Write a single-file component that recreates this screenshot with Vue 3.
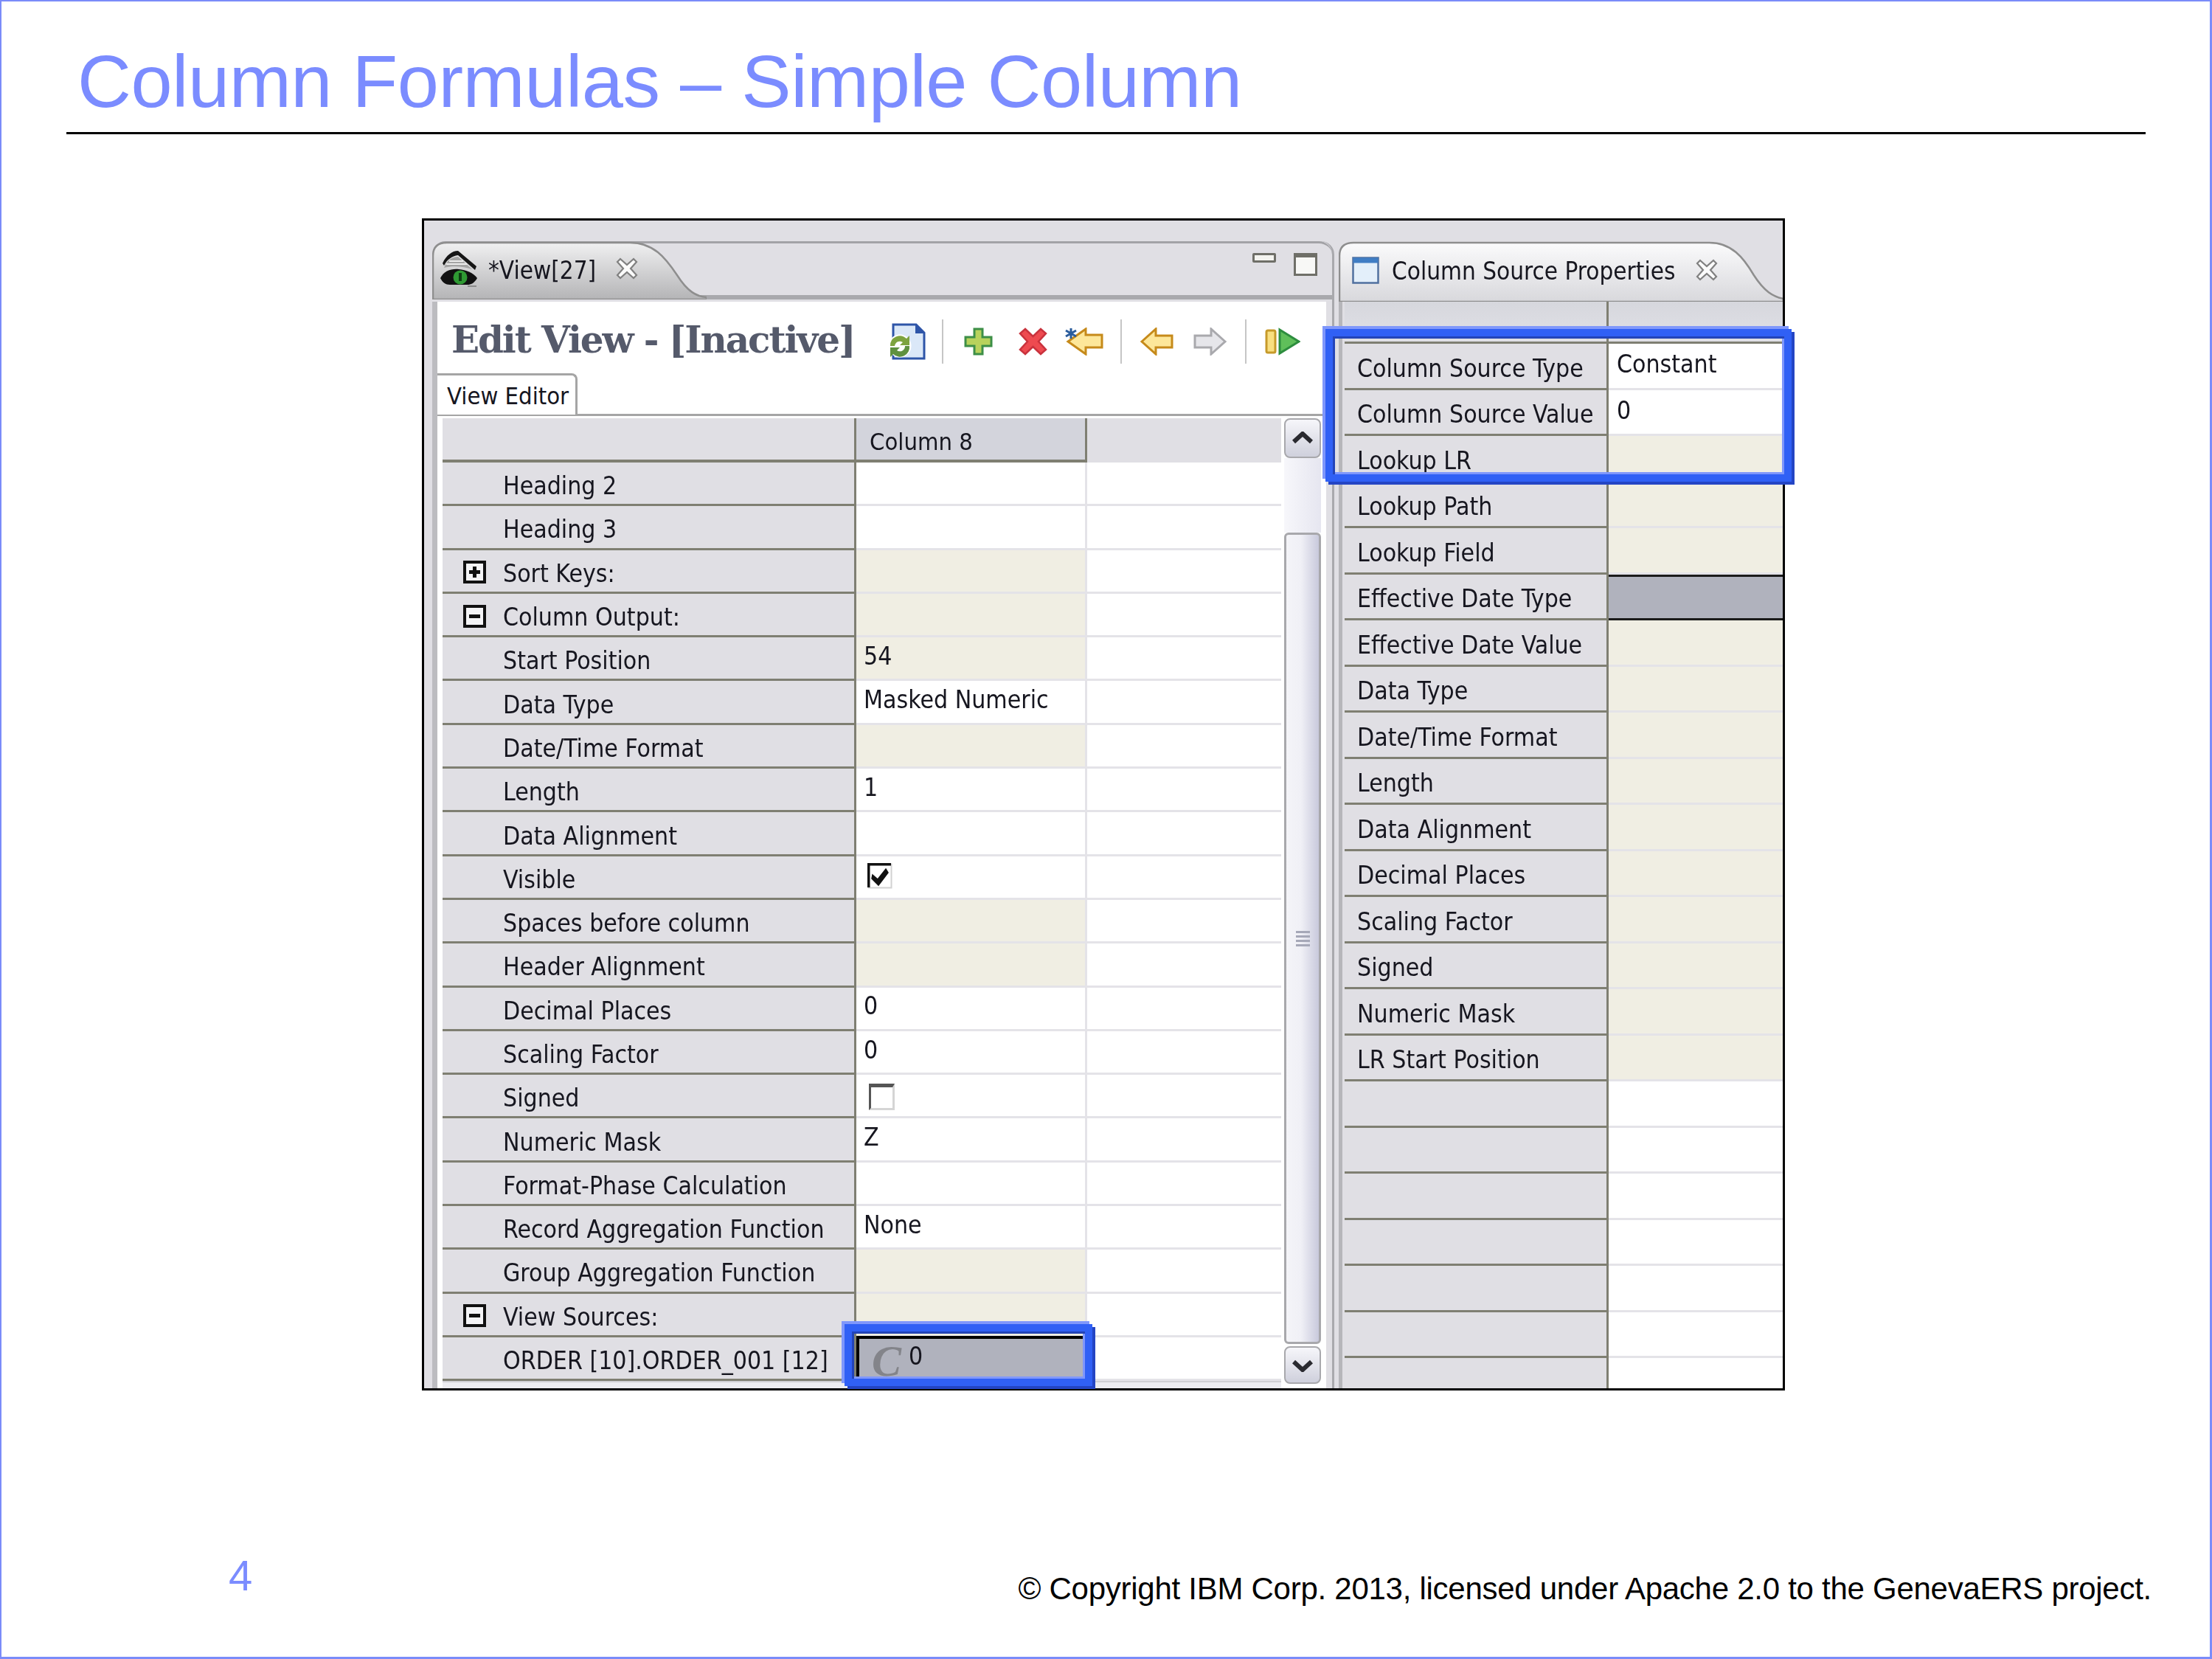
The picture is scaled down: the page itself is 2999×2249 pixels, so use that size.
<script setup>
const viewRows = [
  { label: 'Heading 2' },
  { label: 'Heading 3' },
  { label: 'Sort Keys:', tree: 'plus', kind: 'ro' },
  { label: 'Column Output:', tree: 'minus', kind: 'ro' },
  { label: 'Start Position', value: '54', kind: 'ro' },
  { label: 'Data Type', value: 'Masked Numeric' },
  { label: 'Date/Time Format', kind: 'ro' },
  { label: 'Length', value: '1' },
  { label: 'Data Alignment' },
  { label: 'Visible', check: 'on' },
  { label: 'Spaces before column', kind: 'ro' },
  { label: 'Header Alignment', kind: 'ro' },
  { label: 'Decimal Places', value: '0' },
  { label: 'Scaling Factor', value: '0' },
  { label: 'Signed', check: 'off' },
  { label: 'Numeric Mask', value: 'Z' },
  { label: 'Format-Phase Calculation' },
  { label: 'Record Aggregation Function', value: 'None' },
  { label: 'Group Aggregation Function', kind: 'ro' },
  { label: 'View Sources:', tree: 'minus', kind: 'ro' },
  { label: 'ORDER [10].ORDER_001 [12]', kind: 'sel' }
]

const sourceRows = [
  { label: 'Column Source Type', value: 'Constant' },
  { label: 'Column Source Value', value: '0' },
  { label: 'Lookup LR', kind: 'ro' },
  { label: 'Lookup Path', kind: 'ro' },
  { label: 'Lookup Field', kind: 'ro' },
  { label: 'Effective Date Type', kind: 'sel' },
  { label: 'Effective Date Value', kind: 'ro' },
  { label: 'Data Type', kind: 'ro' },
  { label: 'Date/Time Format', kind: 'ro' },
  { label: 'Length', kind: 'ro' },
  { label: 'Data Alignment', kind: 'ro' },
  { label: 'Decimal Places', kind: 'ro' },
  { label: 'Scaling Factor', kind: 'ro' },
  { label: 'Signed', kind: 'ro' },
  { label: 'Numeric Mask', kind: 'ro' },
  { label: 'LR Start Position', kind: 'ro' },
  { label: '' }, { label: '' }, { label: '' }, { label: '' }, { label: '' }, { label: '' }, { label: '' }
]
</script>

<template>
  <div class="slide">
    <h1 class="title">Column Formulas – Simple Column</h1>
    <div class="rule"></div>

    <div class="shot">
      <section class="pane pane-left">
        <div class="tabbar">
          <div class="tab tab-view">
            <svg class="tab-bg" viewBox="0 0 372 79" preserveAspectRatio="none">
              <defs>
                <linearGradient id="tabfill" x1="0" y1="0" x2="0" y2="1">
                  <stop offset="0" stop-color="#f0f0f1" />
                  <stop offset="1" stop-color="#b4b4b6" />
                </linearGradient>
              </defs>
              <path d="M1 79V20Q1 2 20 2H268C300 2 316 22 332 46 346 68 358 75 372 76V79Z" fill="url(#tabfill)" stroke="#8e8e8e" stroke-width="2.5" />
            </svg>
            <svg class="eye" viewBox="0 0 50 50">
              <path d="M3 18C8 7 16 1 24 1L49 22 47 27 24 7C16 8 9 13 5 21Z" fill="#161616" />
              <path d="M5 24C9 14 16 9 24 9L43 26C32 22 16 21 5 24Z" fill="#a4a4a4" />
              <path d="M12 15H31M8 19H36" stroke="#ececec" stroke-width="2" />
              <path d="M0 38C5 28 15 25 25 26 35 27 44 30 50 38 46 45 41 47 37 47H13C7 47 3 44 0 38Z" fill="#111" />
              <circle cx="27" cy="37" r="9.5" fill="#2f9a33" />
              <path d="M25 31h4v11h-4z" fill="#0e3d12" />
              <path d="M37 48h12v2H37z" fill="#8c8c8c" />
            </svg>
            <span class="tab-text view-text">*View[27]</span>
            <svg class="close" viewBox="0 0 32 32">
              <path d="M3 7L7 3 16 11 25 3 29 7 21 16 29 25 25 29 16 21 7 29 3 25 11 16Z" fill="#fbfbfb" stroke="#808080" stroke-width="2.2" />
            </svg>
          </div>
          <div class="win-btns">
            <i class="btn-min"></i>
            <i class="btn-max"></i>
          </div>
        </div>

        <div class="editor">
          <div class="form-head">
            <h2 class="form-title">Edit View - [Inactive]</h2>
            <div class="toolbar">
              <svg class="t-doc" viewBox="0 0 51 50">
                <path d="M7 2H38L49 13V48H7Z" fill="#dbe8f8" stroke="#2e55a8" stroke-width="3" />
                <path d="M37 2L49 14H37Z" fill="#2e55a8" />
                <circle cx="16" cy="31" r="15.5" fill="#fff" />
                <path d="M3 31A13 13 0 0 1 25 21L29 17V30H16L20 26A7 7 0 0 0 9 31Z" fill="#7da33f" />
                <path d="M29 31A13 13 0 0 1 7 42L3 46V33H16L12 37A7 7 0 0 0 23 31Z" fill="#5f9140" />
              </svg>
              <i class="sep s1"></i>
              <svg class="t-plus" viewBox="0 0 39 38">
                <path d="M14 2H25V13H37V25H25V36H14V25H2V13H14Z" fill="#b8d25c" stroke="#3d8f47" stroke-width="3" />
              </svg>
              <svg class="t-del" viewBox="0 0 39 38">
                <path d="M9 2L19.5 12 30 2 37 8 27 19 37 30 30 36 19.5 26 9 36 2 30 12 19 2 8Z" fill="#ee4a50" stroke="#c9323d" stroke-width="2.5" />
              </svg>
              <svg class="t-star" viewBox="0 0 52 38">
                <path d="M4 19L28 2V10H50V27H28V36Z" fill="#fde79a" stroke="#c68a1a" stroke-width="3" />
                <path d="M8 1V15M1 4L15 12M15 4L1 12" stroke="#2a5c9c" stroke-width="3" />
              </svg>
              <i class="sep s2"></i>
              <svg class="t-back" viewBox="0 0 45 38">
                <path d="M2 19L21 2V11H43V27H21V36Z" fill="#fde79a" stroke="#c68a1a" stroke-width="3" />
              </svg>
              <svg class="t-fwd" viewBox="0 0 45 38">
                <path d="M43 19L24 2V11H2V27H24V36Z" fill="#e6e6ea" stroke="#a9a9ad" stroke-width="3" />
              </svg>
              <i class="sep s3"></i>
              <svg class="t-run" viewBox="0 0 48 38">
                <rect x="2" y="4" width="12" height="30" rx="2" fill="#f8df80" stroke="#c69a2a" stroke-width="3" />
                <path d="M20 3L46 19 20 35Z" fill="#5fbf5a" stroke="#2d8d3e" stroke-width="3" />
              </svg>
            </div>
          </div>

          <div class="form-tabs">
            <div class="form-tab">View Editor</div>
          </div>

          <div class="grid-wrap">
            <div class="grid-scroll">
              <div class="vgrid">
                <div class="vhead vhead-label"></div>
                <div class="vhead vhead-col">Column 8</div>
                <div class="vhead vhead-fill"></div>
                <template v-for="row in viewRows" :key="row.label">
                  <div class="vlabel">
                    <span v-if="row.tree" class="tree">
                      <i v-if="row.tree === 'plus'" class="tree-v"></i>
                      <i class="tree-h"></i>
                    </span>
                    <span class="vlabel-text" :class="{ indent: !row.tree }">{{ row.label }}</span>
                  </div>
                  <div class="vval" :class="row.kind">
                    <span v-if="row.value" class="val-text">{{ row.value }}</span>
                    <svg v-if="row.check === 'on'" class="check" viewBox="0 0 34 35">
                      <rect x="1.5" y="1.5" width="31" height="32" fill="#fff" stroke="#d2d2d2" stroke-width="2" />
                      <path d="M1.5 33V1.5H32" fill="none" stroke="#111" stroke-width="4" />
                      <path d="M7 16L14 22 25 8 28 13 15 30 6 21Z" fill="#111" stroke="#111" stroke-width="1.5" />
                    </svg>
                    <i v-if="row.check === 'off'" class="uncheck"></i>
                    <template v-if="row.kind === 'sel'">
                      <span class="const-c">C</span>
                      <span class="const-val">0</span>
                    </template>
                  </div>
                  <div class="vfill"></div>
                </template>
              </div>
              <div class="hscroll"></div>
            </div>
            <div class="vscroll">
              <div class="sb-btn">
                <svg viewBox="0 0 28 18"><path d="M2 14L14 3 26 14" fill="none" stroke="#2a2a30" stroke-width="6" /></svg>
              </div>
              <div class="sb-track"></div>
              <div class="sb-thumb">
                <i></i><i></i><i></i><i></i>
              </div>
              <div class="sb-btn sb-btn-down">
                <svg viewBox="0 0 28 18"><path d="M2 4L14 15 26 4" fill="none" stroke="#2a2a30" stroke-width="6" /></svg>
              </div>
            </div>
          </div>
        </div>
      </section>

      <section class="pane pane-right">
        <div class="tab tab-source">
          <svg class="tab-bg" viewBox="0 0 600 82" preserveAspectRatio="none">
            <path d="M1 82V20Q1 2 20 2H500C530 2 546 22 560 46 574 68 586 75 600 78V82Z" fill="url(#tabfill2)" stroke="#8e8e8e" stroke-width="2.5" />
            <defs>
              <linearGradient id="tabfill2" x1="0" y1="0" x2="0" y2="1">
                <stop offset="0" stop-color="#fbfbfc" />
                <stop offset="1" stop-color="#d8d8dc" />
              </linearGradient>
            </defs>
          </svg>
          <svg class="win-icon" viewBox="0 0 37 37">
            <rect x="1.5" y="1.5" width="34" height="34" fill="#e3effa" stroke="#50709f" stroke-width="2.5" />
            <rect x="1.5" y="1.5" width="34" height="7" fill="#3f7dc4" />
          </svg>
          <span class="tab-text source-text">Column Source Properties</span>
          <svg class="close" viewBox="0 0 32 32">
            <path d="M3 7L7 3 16 11 25 3 29 7 21 16 29 25 25 29 16 21 7 29 3 25 11 16Z" fill="#fbfbfb" stroke="#808080" stroke-width="2.2" />
          </svg>
        </div>
        <div class="source-body">
          <div class="sgrid">
            <div class="shead shead-label"></div>
            <div class="shead"></div>
            <template v-for="(row, i) in sourceRows" :key="i">
              <div class="slabel"><span>{{ row.label }}</span></div>
              <div class="sval" :class="row.kind"><span v-if="row.value">{{ row.value }}</span></div>
            </template>
          </div>
        </div>
      </section>

      <div class="mark mark-props"></div>
      <div class="mark mark-cell"></div>
    </div>

    <footer class="foot">
      <span class="page-no">4</span>
      <span class="copy">© Copyright IBM Corp. 2013, licensed under Apache 2.0 to the GenevaERS project.</span>
    </footer>
  </div>
</template>

<style>
html, body {
  margin: 0;
  background: #fff;
}
</style>

<style scoped>
.slide {
  width: 2999px;
  height: 2249px;
  box-sizing: border-box;
  border: 2px solid #7b8cf9;
  border-width: 2px 3px 3px 2px;
  background: #fff;
  display: flex;
  flex-direction: column;
  font-family: "Liberation Sans", Arial, sans-serif;
  overflow: hidden;
}
.title {
  margin: 0 0 0 103px;
  padding-top: 48px;
  height: 120px;
  font-size: 101px;
  line-height: 120px;
  font-weight: 400;
  letter-spacing: -.5px;
  color: #7b8cff;
  white-space: nowrap;
}
.rule {
  margin: 9px 0 0 88px;
  width: 2819px;
  height: 3px;
  background: #000;
}
.shot {
  position: relative;
  margin: 114px 0 0 570px;
  width: 1848px;
  height: 1589px;
  box-sizing: border-box;
  border: 3px solid #000;
  background: #e0dfe4;
  display: flex;
  padding: 28px 0 0 11px;
  color: #16161f;
  font-family: "DejaVu Sans Condensed", "DejaVu Sans", sans-serif;
  font-stretch: condensed;
}
.pane {
  position: relative;
  display: flex;
  flex-direction: column;
  filter: blur(.5px);
}
.pane-left {
  width: 1220px;
  flex: none;
  border-right: 3px solid #a9a9ad;
  border-radius: 18px 18px 0 0;
}
.pane-right {
  margin-left: 6px;
  flex: 1;
  min-width: 0;
  overflow: hidden;
}

/* view tabs */
.tabbar {
  height: 79px;
  flex: none;
  display: flex;
  justify-content: space-between;
  box-sizing: border-box;
  border-top: 3px solid #a2a2a6;
  border-bottom: 6px solid #a9a9ad;
  border-radius: 18px 18px 0 0;
}
.tab {
  position: relative;
  display: flex;
  align-items: center;
}
.tab-bg {
  position: absolute;
  left: 0;
  top: 0;
  width: 100%;
  height: 100%;
}
.tab-view {
  width: 372px;
  height: 79px;
  margin-top: -3px;
  padding-left: 11px;
  box-sizing: border-box;
}
.eye {
  position: relative;
  width: 50px;
  height: 50px;
  margin-top: -6px;
}
.tab-text {
  position: relative;
  font-size: 33px;
  white-space: nowrap;
}
.view-text {
  margin: 0 0 0 15px;
  width: 172px;
}
.close {
  position: relative;
  width: 32px;
  height: 32px;
  margin-top: -5px;
}
.win-btns {
  display: flex;
  align-items: flex-start;
  gap: 24px;
  padding: 13px 20px 0 0;
}
.btn-min {
  width: 32px;
  height: 13px;
  box-sizing: border-box;
  border: 3px solid #6f6f68;
  background: #f4f4f0;
  border-radius: 2px;
}
.btn-max {
  width: 32px;
  height: 31px;
  box-sizing: border-box;
  border: 3px solid #6f6f68;
  border-top-width: 6px;
  background: #f8f8f6;
}

/* editor body */
.editor {
  flex: 1;
  min-height: 0;
  display: flex;
  flex-direction: column;
  margin: 3px 8px 0 7px;
  background: #fff;
  box-shadow: -7px 0 0 #bcbcc0;
}
.form-head {
  height: 97px;
  flex: none;
  display: flex;
  align-items: center;
}
.form-title {
  margin: 5px 0 0 19px;
  width: 592px;
  flex: none;
  font-family: "DejaVu Serif", serif;
  font-stretch: normal;
  font-size: 50px;
  font-weight: 700;
  letter-spacing: -2.1px;
  color: #555a6b;
  white-space: nowrap;
}
.toolbar {
  display: flex;
  align-items: center;
  margin-top: 11px;
}
.toolbar svg {
  flex: none;
}
.t-doc { width: 51px; height: 50px; margin-right: 22px; }
.sep {
  width: 2px;
  height: 60px;
  flex: none;
  background: #c6c6c6;
}
.s1 { margin-right: 28px; }
.t-plus { width: 39px; height: 38px; margin-right: 35px; }
.t-del { width: 39px; height: 38px; margin-right: 24px; }
.t-star { width: 52px; height: 38px; margin-right: 23px; }
.s2 { margin-right: 25px; }
.t-back { width: 45px; height: 38px; margin-right: 27px; }
.t-fwd { width: 45px; height: 38px; margin-right: 25px; }
.s3 { margin-right: 25px; }
.t-run { width: 48px; height: 38px; }

.form-tabs {
  height: 58px;
  flex: none;
  box-sizing: border-box;
  border-bottom: 3px solid #a5a5a5;
}
.form-tab {
  width: 190px;
  height: 56px;
  box-sizing: border-box;
  padding: 9px 0 0 13px;
  border: 3px solid #a5a5a5;
  border-width: 3px 3px 0 0;
  border-radius: 0 8px 0 0;
  background: #fff;
  font-size: 32.5px;
  line-height: 38px;
  white-space: nowrap;
}

/* view grid */
.grid-wrap {
  flex: 1;
  min-height: 0;
  display: flex;
  margin: 3px 0 0 7px;
}
.grid-scroll {
  width: 1137px;
  flex: none;
  display: flex;
  flex-direction: column;
  overflow: hidden;
}
.vgrid {
  display: grid;
  grid-template-columns: 561px 313px 1fr;
  grid-template-rows: 60px repeat(21, 59.3px);
}
.vhead {
  box-sizing: border-box;
  background: #e0dfe4;
  font-size: 32.5px;
}
.vhead-label {
  border-bottom: 4px solid #7f7f72;
  border-right: 3px solid #7f7f72;
}
.vhead-col {
  background: #d3d4dc;
  border-bottom: 4px solid #7f7f72;
  border-right: 3px solid #7f7f72;
  padding: 13px 0 0 18px;
  line-height: 38px;
}
.vlabel {
  box-sizing: border-box;
  display: flex;
  align-items: center;
  padding: 7px 0 0 28px;
  background: #e0dfe4;
  border-bottom: 3px solid #7f7f72;
  border-right: 3px solid #7f7f72;
  font-size: 33.5px;
  white-space: nowrap;
}
.vlabel-text {
  margin-left: 23px;
}
.vlabel-text.indent {
  margin-left: 54px;
}
.tree {
  position: relative;
  width: 31px;
  height: 31px;
  box-sizing: border-box;
  border: 4px solid #111;
  background: #f4f4f6;
  margin-top: -3px;
}
.tree-h {
  position: absolute;
  left: 4px;
  top: 9px;
  width: 15px;
  height: 5px;
  background: #111;
}
.tree-v {
  position: absolute;
  left: 9px;
  top: 4px;
  width: 5px;
  height: 15px;
  background: #111;
}
.vval {
  box-sizing: border-box;
  display: flex;
  align-items: center;
  padding-left: 10px;
  background: #fff;
  border-bottom: 3px solid #e4e3e8;
  border-right: 3px solid #e4e3e8;
  font-size: 33.5px;
  white-space: nowrap;
}
.vval.ro {
  background: #f0eee3;
}
.vval.sel {
  background: #b0b2bd;
  border-top: 4px solid #000;
  border-left: 4px solid #000;
  margin-top: -2px;
  padding-left: 17px;
  align-items: flex-start;
}
.val-text {
  margin-top: -6px;
}
.vfill {
  box-sizing: border-box;
  background: #fff;
  border-bottom: 3px solid #e4e3e8;
}
.check {
  width: 34px;
  height: 35px;
  margin: -2px 0 0 5px;
}
.uncheck {
  width: 35px;
  height: 36px;
  box-sizing: border-box;
  margin: 3px 0 0 7px;
  border: 3px solid #555;
  border-top-width: 5px;
  border-right-color: #d5d5d5;
  border-bottom-color: #d5d5d5;
}
.const-c {
  margin-top: 4px;
  font-family: "Liberation Serif", serif;
  font-size: 60px;
  line-height: 52px;
  font-weight: 700;
  font-style: italic;
  color: #83848a;
}
.const-val {
  margin: 5px 0 0 10px;
  line-height: 38px;
}
.hscroll {
  flex: 1;
  background: #ededf1;
  border-top: 2px solid #d0d0d4;
}

/* scrollbar */
.vscroll {
  flex: 1;
  display: flex;
  flex-direction: column;
  padding: 0 7px 6px 4px;
  box-sizing: border-box;
  background: #fff;
}
.sb-btn {
  height: 54px;
  flex: none;
  box-sizing: border-box;
  border: 2px solid #a8a8ac;
  border-radius: 8px;
  background: linear-gradient(#f6f6fa, #cfd0dc);
  display: flex;
  align-items: center;
  justify-content: center;
}
.sb-btn svg {
  width: 28px;
  height: 18px;
}
.sb-btn-down {
  height: 51px;
  margin-top: 3px;
}
.sb-track {
  height: 101px;
  flex: none;
  background: linear-gradient(90deg, #f7f7fb, #e6e6f0);
}
.sb-thumb {
  flex: 1;
  box-sizing: border-box;
  border: 3px solid #a8a8ac;
  border-radius: 6px;
  background: linear-gradient(90deg, #f4f4f8, #f0f0f6 45%, #c8c9dc);
  display: flex;
  flex-direction: column;
  align-items: center;
  justify-content: center;
  gap: 3px;
}
.sb-thumb i {
  width: 19px;
  height: 3px;
  background: #a6a8b8;
}

/* source properties */
.tab-source {
  width: 603px;
  height: 82px;
  flex: none;
  padding-left: 18px;
  box-sizing: border-box;
}
.win-icon {
  position: relative;
  width: 37px;
  height: 37px;
  margin-top: -4px;
}
.source-text {
  margin: -2px 0 0 17px;
  width: 411px;
}
.source-body {
  flex: 1;
  min-height: 0;
  overflow: hidden;
  border-left: 5px solid #b6b6ba;
  margin-top: -1px;
  padding-left: 3px;
}
.sgrid {
  display: grid;
  grid-template-columns: 358px 1fr;
  grid-template-rows: 58px repeat(23, 62.5px);
}
.shead {
  box-sizing: border-box;
  background: linear-gradient(#d6d7dd, #e0e0e6);
  border-bottom: 3px solid #7f7f72;
}
.shead-label {
  border-right: 3px solid #7f7f72;
}
.slabel {
  box-sizing: border-box;
  display: flex;
  align-items: center;
  padding: 7px 0 0 17px;
  background: #e0dfe4;
  border-bottom: 3px solid #7f7f72;
  border-right: 3px solid #7f7f72;
  font-size: 33.5px;
  white-space: nowrap;
}
.sval {
  box-sizing: border-box;
  display: flex;
  align-items: center;
  padding: 0 0 4px 11px;
  background: #fff;
  border-bottom: 3px solid #e4e3e8;
  font-size: 33.5px;
  white-space: nowrap;
}
.sval.ro {
  background: #f0eee3;
}
.sval.sel {
  background: #b0b2bd;
  border-top: 3px solid #1a1a1a;
  border-bottom: 3px solid #1a1a1a;
}

/* blue highlight frames drawn on top of the screenshot */
.mark {
  position: absolute;
  box-sizing: border-box;
  border: 10px solid #3060f5;
  box-shadow:
    -4px -4px 0 #7f97fb,
    4px 4px 0 #2445c4,
    inset 3px 3px 0 #2344b8,
    inset -3px -3px 0 #7f97fb;
}
.mark-props {
  left: 1222px;
  top: 147px;
  width: 632px;
  height: 207px;
}
.mark-cell {
  left: 570px;
  top: 1496px;
  width: 336px;
  height: 84px;
}

/* footer */
.foot {
  flex: 1;
  display: flex;
  justify-content: space-between;
  align-items: flex-start;
  padding: 0 79px 0 308px;
}
.page-no {
  margin-top: 218px;
  font-size: 58px;
  line-height: 66px;
  color: #7b8cff;
}
.copy {
  margin-top: 244px;
  font-size: 42px;
  line-height: 50px;
  letter-spacing: -.27px;
  color: #000;
  white-space: nowrap;
}
</style>
